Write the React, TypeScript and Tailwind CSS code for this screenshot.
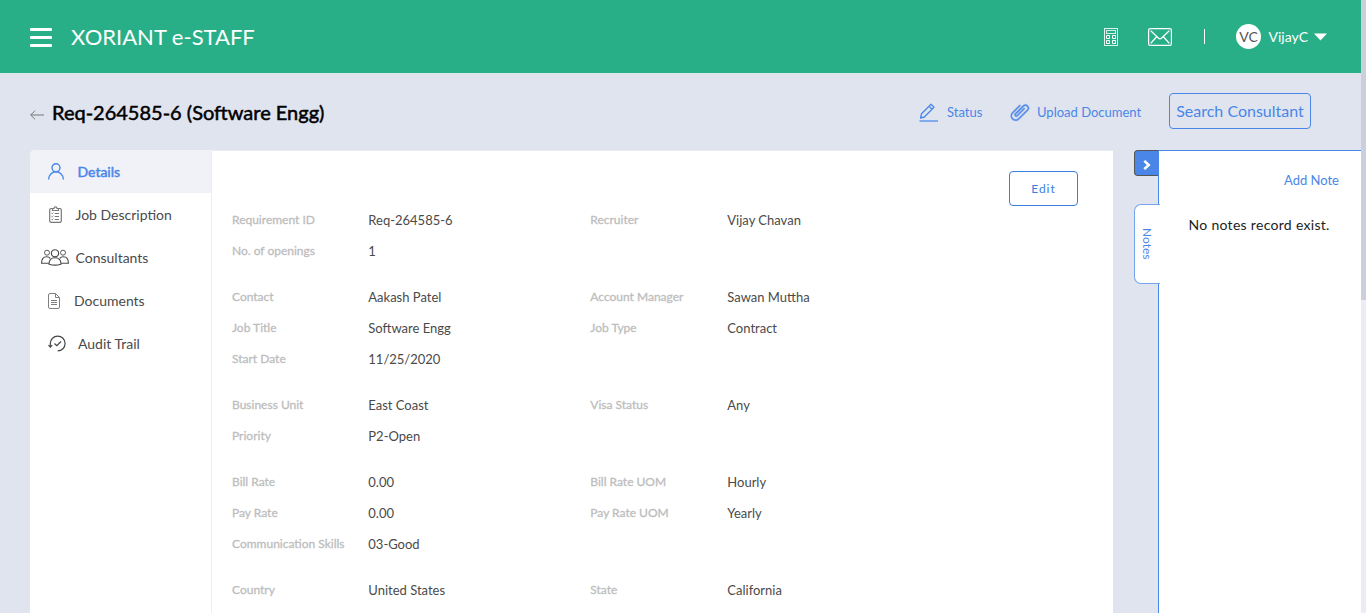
import React from "react";

type Field = [label: string, value: string];
type Row = [left: Field, right?: Field];

const groups: Row[][] = [
  [
    [["Requirement ID", "Req-264585-6"], ["Recruiter", "Vijay Chavan"]],
    [["No. of openings", "1"]],
  ],
  [
    [["Contact", "Aakash Patel"], ["Account Manager", "Sawan Muttha"]],
    [["Job Title", "Software Engg"], ["Job Type", "Contract"]],
    [["Start Date", "11/25/2020"]],
  ],
  [
    [["Business Unit", "East Coast"], ["Visa Status", "Any"]],
    [["Priority", "P2-Open"]],
  ],
  [
    [["Bill Rate", "0.00"], ["Bill Rate UOM", "Hourly"]],
    [["Pay Rate", "0.00"], ["Pay Rate UOM", "Yearly"]],
    [["Communication Skills", "03-Good"]],
  ],
  [[["Country", "United States"], ["State", "California"]]],
];

function Cell({ field }: { field: Field }) {
  return (
    <>
      <span className="text-[12px] text-[#bdbdbd] [-webkit-text-stroke:0.3px_#bdbdbd]">{field[0]}</span>
      <span className="pt-[2px] text-[13px] text-[#4a4a4a]">{field[1]}</span>
    </>
  );
}

function CalculatorIcon() {
  return (
    <svg width="14" height="18" viewBox="0 0 14 18" fill="none" stroke="#fff" className="shrink-0">
      <rect x="0.5" y="0.5" width="13" height="17" strokeOpacity="0.85" />
      <rect x="2.5" y="2.5" width="9" height="3" strokeOpacity="0.8" />
      <path d="M2.5 7.5h3v3h-3zM8.5 7.5h3v3h-3zM2.5 12.5h3v3h-3zM8.5 12.5h3v3h-3z" />
    </svg>
  );
}

function MailIcon() {
  return (
    <svg width="24" height="18" viewBox="0 0 24 18" fill="none" stroke="#fff" className="shrink-0">
      <rect x="0.6" y="0.6" width="22.8" height="16.8" rx="1.6" strokeWidth="1.2" />
      <path d="M3 3l7.6 7.2q1.4 1.2 2.8 0L21 3M3 15l5.4-6M21 15l-5.4-6" strokeWidth="1.2" strokeLinecap="round" />
    </svg>
  );
}

function PersonIcon() {
  return (
    <svg width="16" height="17" viewBox="0 0 16 17" fill="none" stroke="#4a86e8" strokeWidth="1.4">
      <circle cx="8" cy="4.8" r="4" />
      <path d="M0.7 16.5V16a7.3 7.2 0 0 1 14.6 0v0.5" />
    </svg>
  );
}

function ClipboardIcon() {
  return (
    <svg width="13" height="17" viewBox="0 0 13 17" fill="none" stroke="#777" strokeWidth="1.2">
      <path d="M3.5 2.5h-1.4a1.4 1.4 0 0 0-1.4 1.4v11a1.4 1.4 0 0 0 1.4 1.4h8.8a1.4 1.4 0 0 0 1.4-1.4v-11a1.4 1.4 0 0 0-1.4-1.4h-1.4" />
      <path d="M3.5 4.5v-2h1.5a1.5 1.7 0 0 1 3 0h1.5v2z" />
      <path d="M5.7 7.5h4.3M5.7 10.5h4.3M5.7 13.5h4.3" strokeWidth="1" />
      <path d="M2.5 7.3l0.7 0.6 1.2-1.3M2.5 10.3l0.7 0.6 1.2-1.3M2.5 13.3l0.7 0.6 1.2-1.3" strokeWidth="0.9" />
    </svg>
  );
}

function GroupIcon() {
  return (
    <svg width="28" height="17" viewBox="0 0 28 17" fill="none" stroke="#4a4a4a" strokeWidth="1.15">
      <circle cx="14" cy="4.3" r="3.6" />
      <path d="M8 15.2c0-4.2 2-6.4 6-6.4s6 2.2 6 6.4q-6 1.9-12 0z" />
      <circle cx="6" cy="3.7" r="2.5" strokeWidth="0.9" />
      <circle cx="22" cy="3.7" r="2.5" strokeWidth="0.9" />
      <path d="M8 14.2H0.6c0-4.5 1.7-6.5 5-6.5q2.6 0 3.6 1.7M20 14.2h7.4c0-4.5-1.7-6.5-5-6.5q-2.6 0-3.6 1.7" />
    </svg>
  );
}

function DocumentIcon() {
  return (
    <svg width="12" height="16" viewBox="0 0 12 16" fill="none" stroke="#808080" strokeWidth="1">
      <path d="M2 0.5h5.5l4 4v9.5a1.5 1.5 0 0 1-1.5 1.5H2a1.5 1.5 0 0 1-1.5-1.5V2A1.5 1.5 0 0 1 2 0.5zM7.5 0.5v4h4" />
      <path d="M3 7.5h6M3 9.5h6M3 11.5h6" />
    </svg>
  );
}

function AuditIcon() {
  return (
    <svg width="18" height="17" viewBox="0 0 18 17" fill="none" stroke="#444" strokeWidth="1.2">
      <path d="M2.3 11V8.5A7.4 7.4 0 1 1 9.700 15.900" />
      <path d="M0.500 10.200l1.800 2 1.900-2M6.500 8.500l2.300 2.200L13 6.500" />
    </svg>
  );
}

function PenIcon() {
  return (
    <svg width="20" height="20" viewBox="0 0 20 20" fill="none" stroke="#4a86e8" strokeWidth="1.3" className="shrink-0">
      <path d="M1.5 15l1-4.200L12 1.300l3 3L5.300 14zM10 3.300l3 3" strokeLinejoin="round" />
      <path d="M0.500 18h18.500" strokeWidth="1.800" strokeOpacity="0.7" />
    </svg>
  );
}

function ClipIcon() {
  return (
    <svg width="20" height="19" viewBox="0 0 20 19" fill="none" stroke="#4a86e8" strokeLinecap="round" strokeLinejoin="round" className="shrink-0">
      <path
        d="M14.200 5.600L7.200 12.600a1.200 1.200 0 0 1-1.700-1.700l7.900-7.900a2.900 2.900 0 0 1 4.100 4.100L8.700 15.900a4.300 4.300 0 0 1-6.100-6.100L9.800 2.600"
        strokeWidth="2.400"
        strokeOpacity="0.35"
      />
      <path
        d="M14.200 5.600L7.200 12.600a1.200 1.200 0 0 1-1.700-1.700l7.900-7.900a2.900 2.900 0 0 1 4.100 4.100L8.700 15.900a4.300 4.300 0 0 1-6.100-6.100L9.800 2.600"
        strokeWidth="1.200"
      />
    </svg>
  );
}

const navItems = [
  { label: "Details", Icon: PersonIcon, pad: "pl-[18px] gap-[13.5px]", active: true },
  { label: "Job Description", Icon: ClipboardIcon, pad: "pl-[19px] gap-[13.5px]", active: false },
  { label: "Consultants", Icon: GroupIcon, pad: "pl-[11px] gap-[6.5px]", active: false },
  { label: "Documents", Icon: DocumentIcon, pad: "pl-[18px] gap-[14px]", active: false },
  { label: "Audit Trail", Icon: AuditIcon, pad: "pl-[18px] gap-[12px]", active: false },
];

export default function App() {
  return (
    <div className="flex h-[613px] w-[1366px] overflow-hidden bg-[#e0e4ef] font-['Lato',sans-serif]">
      <div className="flex w-[1361px] shrink-0 flex-col">
        <header className="flex h-[73px] shrink-0 items-center bg-[#29af87] pl-[30px] text-white">
          <div className="flex w-[22px] flex-col gap-[5px] pt-[2px]">
            <span className="h-[3px] rounded-[1px] bg-white" />
            <span className="h-[3px] rounded-[1px] bg-white" />
            <span className="h-[3px] rounded-[1px] bg-white" />
          </div>
          <h1 className="ml-[19px] text-[22px] leading-[26px] whitespace-nowrap">XORIANT e-STAFF</h1>
          <div className="mr-[34px] ml-auto flex items-center">
            <CalculatorIcon />
            <span className="ml-[30px] flex"><MailIcon /></span>
            <span className="ml-[32px] h-[15px] w-px bg-white" />
            <span className="ml-[31px] flex size-[25px] items-center justify-center rounded-full bg-white text-[14px] text-[#555]">VC</span>
            <span className="ml-[7.5px] w-[41.5px] text-[14px] whitespace-nowrap">VijayC</span>
            <svg width="13" height="8" viewBox="0 0 13 8" className="ml-[4px]"><path d="M0 0.5h13L6.5 7.5z" fill="#fff" /></svg>
          </div>
        </header>

        <div className="flex h-[77px] shrink-0 items-center pl-[30px]">
          <svg width="14" height="10" viewBox="0 0 14 10" fill="none" stroke="#777" className="mt-[6px]">
            <path d="M0.7 5H14M5 0.7L0.7 5L5 9.3" />
          </svg>
          <h2 className="ml-[8px] pt-px text-[20px] whitespace-nowrap text-black [-webkit-text-stroke:0.5px_#000]">Req-264585-6 (Software Engg)</h2>
          <div className="mr-[50px] ml-auto flex items-center pb-px text-[#4a86e8]">
            <span className="flex pt-[4px]"><PenIcon /></span>
            <span className="ml-[8px] w-[35px] pt-[3px] text-[13px] whitespace-nowrap">Status</span>
            <span className="ml-[28px] flex pt-[2px]"><ClipIcon /></span>
            <span className="ml-[7px] w-[105px] pt-[3px] text-[13px] whitespace-nowrap">Upload Document</span>
            <button className="ml-[27px] h-[36px] w-[142px] rounded-[4px] border border-[#4a86e8] text-[16px] whitespace-nowrap">Search Consultant</button>
          </div>
        </div>

        <div className="flex grow">
          <main className="ml-[30px] flex w-[1083px] rounded-tl-[5px] bg-white">
            <nav className="w-[182px] shrink-0 border-r border-[#eceef3]">
              {navItems.map(({ label, Icon, pad, active }) => (
                <div
                  key={label}
                  className={`flex h-[43px] items-center text-[14px] whitespace-nowrap ${pad} ${active ? "rounded-tl-[5px] bg-[#f1f2f8] text-[#4a86e8] [-webkit-text-stroke:0.5px_#4a86e8]" : "text-[#4a4a4a]"}`}
                >
                  <Icon />
                  <span>{label}</span>
                </div>
              ))}
            </nav>
            <section className="grow border-t border-[#e9ebf4] pt-[20px]">
              <div className="flex justify-end pr-[35px]">
                <button className="h-[35px] w-[69px] rounded-[4px] border border-[#3c7de0] text-[12px] tracking-[1px] text-[#3c7de0]">Edit</button>
              </div>
              <div className="-mt-[2px] flex flex-col gap-[15px] pl-[20px]">
                {groups.map((rows, i) => (
                  <div key={i}>
                    {rows.map(([left, right]) => (
                      <div key={left[0]} className="grid h-[31px] grid-cols-[136.3px_222px_137px_1fr] items-center whitespace-nowrap">
                        <Cell field={left} />
                        {right && <Cell field={right} />}
                      </div>
                    ))}
                  </div>
                ))}
              </div>
            </section>
          </main>

          <div className="z-10 -mr-px ml-[21px] flex w-[25px] flex-col">
            <button className="flex h-[26px] w-[24px] items-center justify-center rounded-l-[4px] border border-r-0 border-[#555] bg-[#4a86e8] pt-[3px]">
              <svg width="8" height="10" viewBox="0 0 8 10" fill="none" stroke="#fff" strokeWidth="2.6"><path d="M1.3 0.9L5.7 5L1.3 9.1" /></svg>
            </button>
            <div className="mt-[28px] flex h-[80px] w-[26px] items-center justify-center rounded-l-[7px] border border-r-0 border-[#75a5ef] bg-white pr-[2px] text-[12px] text-[#4a86e8] [writing-mode:vertical-rl]">
              <span>Notes</span>
            </div>
          </div>
          <aside className="grow border-t border-l border-[#4a86e8] bg-white">
            <div className="pt-[20px] pr-[22px] text-right text-[13px] leading-[18px] text-[#4a86e8]">Add Note</div>
            <p className="mt-[26px] pl-[29.5px] text-[14px] leading-[20px] tracking-[0.3px] whitespace-nowrap text-[#222]">No notes record exist.</p>
          </aside>
        </div>
      </div>
      <div className="w-[5px] bg-[#ececf4]">
        <div className="h-[300px] bg-[#cdcedd]" />
      </div>
    </div>
  );
}
